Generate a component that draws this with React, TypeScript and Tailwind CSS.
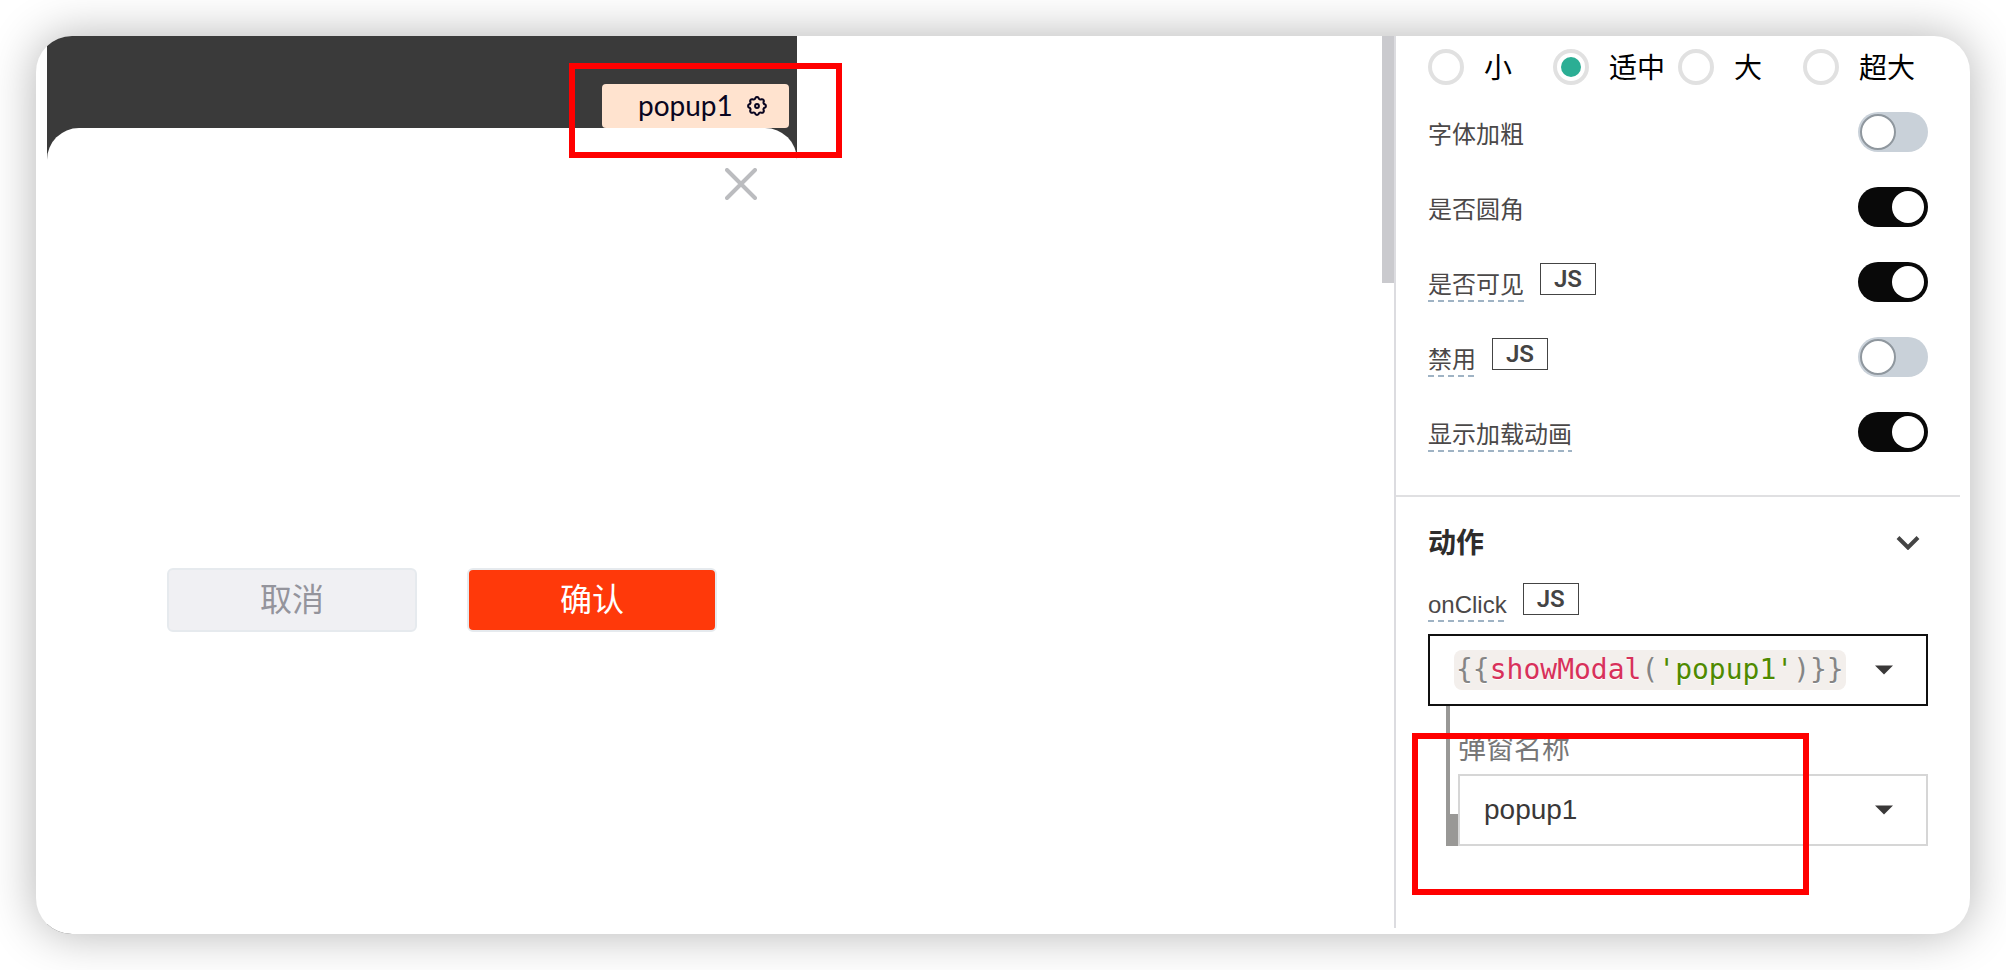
import { useState } from 'react';

type ToggleRowProps = {
	id: string;
	label: string;
	defaultOn?: boolean;
	hint?: boolean;
	js?: boolean;
}

const sizes = ['小', '适中', '大', '超大'];

const toggles: ToggleRowProps[] = [
	{ id: 'bold', label: '字体加粗' },
	{ id: 'rounded', label: '是否圆角', defaultOn: true },
	{ id: 'visible', label: '是否可见', defaultOn: true, hint: true, js: true },
	{ id: 'disabled', label: '禁用', hint: true, js: true },
	{ id: 'loading', label: '显示加载动画', defaultOn: true, hint: true },
];

// 6px dashes with 4px gaps under labels that have a tooltip
const dashed =
	'bg-[repeating-linear-gradient(90deg,#9fb3c4_0_6px,transparent_6px_10px)] bg-[length:100%_2px] bg-bottom bg-no-repeat';

function JsButton() {
	return (
		<button
			type="button"
			className="flex h-8 w-14 items-center justify-center self-start mt-px border border-[#444] font-[Roboto,sans-serif] text-2xl font-semibold leading-none text-[#444]"
		>
			JS
		</button>
	);
}

function GearIcon() {
	return (
		<svg viewBox="0 0 20 20" className="size-5" fill="none" stroke="currentColor" strokeWidth="2" strokeLinejoin="round">
			<path d="M18.04 8.4A1.9 1.9 0 0 1 18.04 11.6A1.9 1.9 0 0 0 16.82 14.56A1.9 1.9 0 0 1 14.56 16.82A1.9 1.9 0 0 0 11.6 18.04A1.9 1.9 0 0 1 8.4 18.04A1.9 1.9 0 0 0 5.44 16.82A1.9 1.9 0 0 1 3.18 14.56A1.9 1.9 0 0 0 1.96 11.6A1.9 1.9 0 0 1 1.96 8.4A1.9 1.9 0 0 0 3.18 5.44A1.9 1.9 0 0 1 5.44 3.18A1.9 1.9 0 0 0 8.4 1.96A1.9 1.9 0 0 1 11.6 1.96A1.9 1.9 0 0 0 14.56 3.18A1.9 1.9 0 0 1 16.82 5.44A1.9 1.9 0 0 0 18.04 8.4z" />
			<circle cx="10" cy="10" r="1.9" />
		</svg>
	);
}

function Caret() {
	return (
		<svg viewBox="0 0 18 10" className="h-[10px] w-[18px] shrink-0" fill="#3a3838">
			<path d="M0 .5h18L9 9.5z" />
		</svg>
	);
}

function ToggleRow({ id, label, defaultOn, hint, js }: ToggleRowProps) {
	return (
		<div className="flex h-10 items-end gap-4">
			<label htmlFor={id} className={`pb-0.5 text-2xl leading-[30px] text-[#4b4848] ${hint ? dashed : ''}`}>
				{label}
			</label>
			{js && <JsButton />}
			<input
				id={id}
				type="checkbox"
				role="switch"
				defaultChecked={defaultOn}
				className="ml-auto flex h-10 w-[70px] appearance-none items-center rounded-full bg-[#c9d1d9] px-0.5 before:size-9 before:rounded-full before:border-2 before:border-[#8f979e] before:bg-white checked:justify-end checked:bg-[#090909] checked:px-1 checked:before:size-8 checked:before:border-0"
			/>
		</div>
	);
}

function PhonePreview() {
	return (
		<div className="flex w-[750px] flex-col bg-[#3a3a3a]">
			<div className="flex h-[92px] items-end justify-end pr-2">
				<div className="relative">
					<button
						type="button"
						className="flex h-11 w-[187px] items-center gap-3.5 rounded bg-[#ffe3cf] pl-9 font-[Lato,sans-serif] text-[28px] leading-none text-[#090520]"
					>
						<span className="pb-0.5">popup1</span>
						<GearIcon />
					</button>
					<div className="pointer-events-none absolute -left-[33px] -top-[21px] z-10 h-[95px] w-[273px] border-6 border-[#ff0000]" />
				</div>
			</div>
			<div className="flex-1 rounded-t-[32px] bg-white pt-10">
				<div className="flex justify-end pr-10">
					<button type="button" aria-label="关闭" className="size-8">
						<svg viewBox="0 0 32 32" fill="none" stroke="#bbbcbf" strokeWidth="4" strokeLinecap="round">
							<path d="M2 2l28 28M30 2L2 30" />
						</svg>
					</button>
				</div>
				<div className="mt-[368px] flex gap-[50px] pl-[120px] text-[32px] leading-none">
					<button type="button" className="h-16 w-[250px] rounded-md border-2 border-[#e6eaee] bg-[#f0f0f3] text-[#94949c]">
						取消
					</button>
					<button type="button" className="h-16 w-[250px] rounded-md border-2 border-[#e6eaee] bg-[#ff390a] text-white">
						确认
					</button>
				</div>
			</div>
		</div>
	);
}

function ActionSection() {
	const [modal, setModal] = useState('popup1');

	return (
		<section className="px-8 pt-[26px]">
			<button type="button" className="flex h-10 w-full items-center justify-between pr-2 text-[28px] leading-none font-bold text-[#2e2c2c]">
				<span className="pt-0.5">动作</span>
				<svg viewBox="0 0 24 14" className="h-[14px] w-6" fill="none" stroke="#444" strokeWidth="4">
					<path d="M2 1.500l10 10L22 1.500" />
				</svg>
			</button>
			<div className="mt-[19px] flex h-10 items-end gap-4">
				<label htmlFor="on-click" className={`pb-0.5 text-2xl leading-[30px] text-[#4b4848] ${dashed}`}>
					onClick
				</label>
				<JsButton />
			</div>
			<button
				id="on-click"
				type="button"
				aria-haspopup="listbox"
				className="mt-3 flex h-18 w-full items-center justify-between border-2 border-[#101010] pr-[33px] pl-6"
			>
				<code className="rounded-lg bg-[#f3efec] px-0.5 font-['DejaVu_Sans_Mono',monospace] text-[28px] leading-10 text-[#858585] text-shadow-[0_1px_0_#fff]">
					{'{{'}
					<span className="text-[#d8315b]">showModal</span>(<span className="text-[#4f8a00]">'popup1'</span>){'}}'}
				</code>
				<Caret />
			</button>
			<div className="relative ml-[18px] flex">
				<div className="flex w-3 flex-col">
					<div className="w-1 flex-1 bg-[#999896]" />
					<div className="h-8 bg-[#999896]" />
				</div>
				<div className="flex-1 pt-7">
					<label htmlFor="modal-name" className="block text-[28px] leading-8 text-[#777]">
						弹窗名称
					</label>
					<div className="mt-2 grid items-center border-2 border-[#d6d6d6] pr-[33px]">
						<select
							id="modal-name"
							value={modal}
							onChange={(e) => setModal(e.target.value)}
							className="col-start-1 row-start-1 h-17 appearance-none bg-transparent pl-6 text-[28px] text-[#3a3838]"
						>
							<option value="popup1">popup1</option>
						</select>
						<div className="pointer-events-none col-start-1 row-start-1 justify-self-end">
							<Caret />
						</div>
					</div>
				</div>
				<div className="pointer-events-none absolute -left-[34px] top-[27px] z-10 h-[162px] w-[397px] border-6 border-[#ff0000]" />
			</div>
		</section>
	);
}

function PropertyPanel() {
	return (
		<aside className="mb-1.5 w-[576px] shrink-0 border-l-2 border-[#dcdce0] pr-[10px]">
			<section className="border-b-2 border-[#e0e0e2] px-8 pt-[13px] pb-[43px]">
				<fieldset className="grid grid-cols-4">
					{sizes.map((size) => (
						<label key={size} className="flex h-9 items-center gap-5 text-[28px] leading-8 whitespace-nowrap text-black">
							<input
								type="radio"
								name="size"
								defaultChecked={size === '适中'}
								className="grid size-9 shrink-0 appearance-none place-items-center rounded-full border-4 border-[#e1e1e1] bg-white checked:before:size-5 checked:before:rounded-full checked:before:bg-[#2bae94]"
							/>
							<span className="pt-1">{size}</span>
						</label>
					))}
				</fieldset>
				<div className="mt-[27px] flex flex-col gap-[35px]">
					{toggles.map((row) => (
						<ToggleRow key={row.id} {...row} />
					))}
				</div>
			</section>
			<ActionSection />
		</aside>
	);
}

export default function App() {
	return (
		<div className="flex min-h-screen bg-white p-9 font-['Liberation_Sans','Noto_Sans_CJK_SC',sans-serif]">
			<div className="flex flex-1 overflow-hidden rounded-[36px] bg-white shadow-[0_0_48px_rgba(0,0,0,0.3)]">
				<main className="flex flex-1 pl-[11px]">
					<PhonePreview />
					<div className="ml-auto h-[247px] w-3 bg-[#cacace]" />
				</main>
				<PropertyPanel />
			</div>
		</div>
	);
}
